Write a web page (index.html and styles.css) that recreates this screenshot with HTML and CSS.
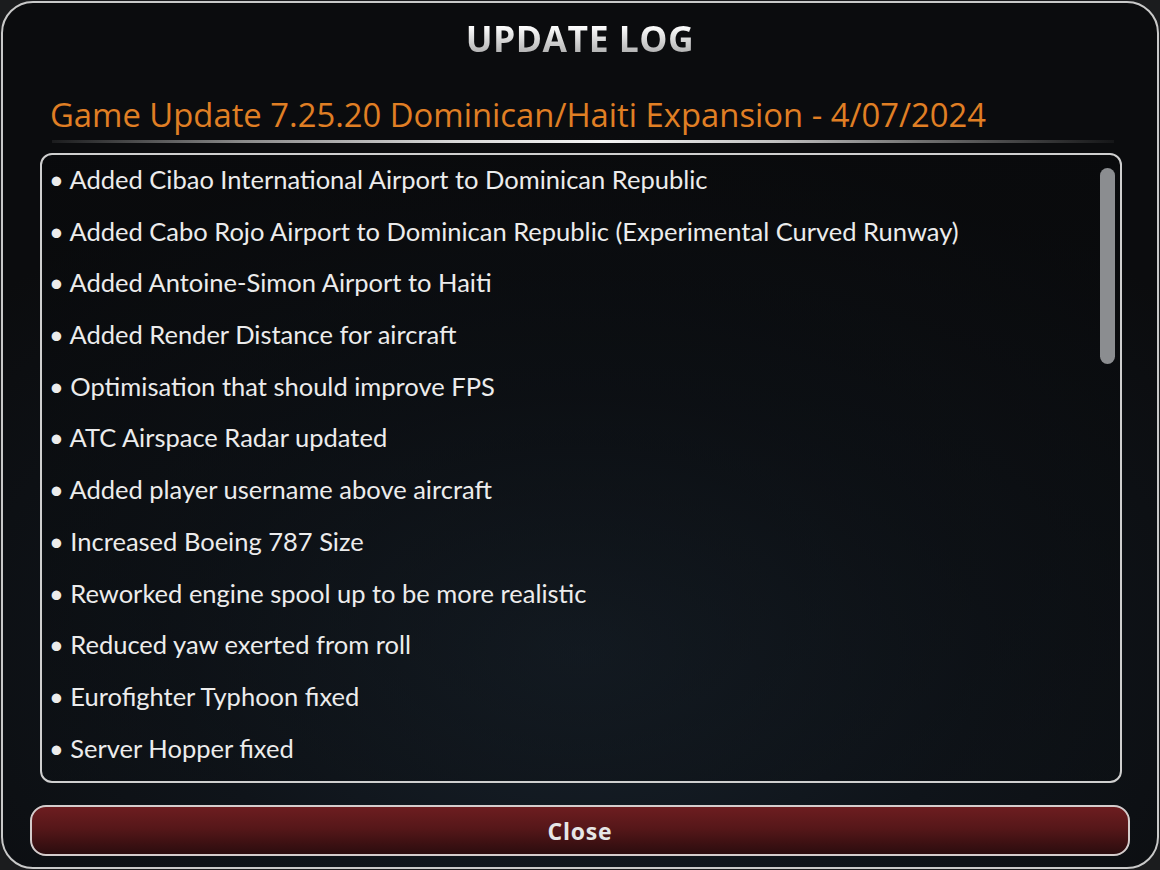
FILE: index.html
```html
<!DOCTYPE html>
<html>
<head>
<meta charset="utf-8">
<link rel="stylesheet" href="styles.css">
</head>
<body>
<div class="panel">
  <h1 class="title">UPDATE LOG</h1>
  <h2 class="subtitle">Game Update 7.25.20 Dominican/Haiti Expansion - 4/07/2024</h2>
  <div class="divider"></div>
  <div class="logbox">
    <ul class="items">
      <li>• Added Cibao International Airport to Dominican Republic</li>
      <li>• Added Cabo Rojo Airport to Dominican Republic (Experimental Curved Runway)</li>
      <li>• Added Antoine-Simon Airport to Haiti</li>
      <li>• Added Render Distance for aircraft</li>
      <li>• Optimisation that should improve FPS</li>
      <li>• ATC Airspace Radar updated</li>
      <li>• Added player username above aircraft</li>
      <li>• Increased Boeing 787 Size</li>
      <li>• Reworked engine spool up to be more realistic</li>
      <li>• Reduced yaw exerted from roll</li>
      <li>• Eurofighter Typhoon fixed</li>
      <li>• Server Hopper fixed</li>
    </ul>
    <div class="scrollbar"></div>
  </div>
  <button class="close">Close</button>
</div>
</body>
</html>
```
FILE: styles.css
```css
html, body {
  margin: 0;
  padding: 0;
  background: #1b1c1e;
}
body {
  width: 1160px;
  height: 870px;
  padding: 1px;
  box-sizing: border-box;
}
.panel {
  box-sizing: border-box;
  width: 1158px;
  height: 868px;
  border: 2px solid #c9c9c9;
  border-radius: 32px;
  background: radial-gradient(ellipse 70% 60% at 50% 75%, #18222c 0%, #0f141a 50%, #0b0c0e 100%);
  display: flex;
  flex-direction: column;
  padding: 0 27px 11px 27px;
  overflow: hidden;
}
.title {
  margin: 15px 0 0 0;
  height: 40px;
  flex: none;
  text-align: center;
  font-family: "Open Sans", sans-serif;
  font-weight: 700;
  font-size: 35.5px;
  line-height: 40px;
  letter-spacing: 0.5px;
  background: linear-gradient(180deg, #ffffff 20%, #a3a3a3 100%);
  -webkit-background-clip: text;
  background-clip: text;
  color: transparent;
}
.subtitle {
  margin: 39px 0 0 20px;
  height: 36px;
  flex: none;
  font-family: "Open Sans", sans-serif;
  font-weight: 400;
  font-size: 32.8px;
  line-height: 36px;
  color: #e07f24;
  white-space: nowrap;
}
.divider {
  margin: 7px 16px 0 22px;
  height: 3px;
  flex: none;
  background: linear-gradient(90deg, rgba(120,120,120,0.15) 0%, #8a8a8a 18%, #d8d8d8 38%, #f4f4f4 52%, #c0c0c0 68%, #707070 82%, rgba(80,80,80,0.15) 100%);
}
.logbox {
  margin: 10px 8px 0 10px;
  height: 630px;
  flex: none;
  box-sizing: border-box;
  border: 2px solid #cfcfcf;
  border-radius: 12px;
  display: flex;
  padding: 0 5px 0 7px;
  background: linear-gradient(180deg, rgba(8,9,11,0.6), rgba(12,16,20,0.4));
}
.items {
  list-style: none;
  margin: 0;
  padding: 0;
  flex: 1;
  display: flex;
  flex-direction: column;
  padding-top: 4px;
}
.items li {
  height: 51.7px;
  line-height: 40px;
  font-family: "Lato", sans-serif;
  font-size: 25.5px;
  color: #ececec;
  white-space: nowrap;
}
.scrollbar {
  width: 15px;
  height: 196px;
  margin-top: 13px;
  border-radius: 8px;
  background: #8b8d90;
}
.close {
  margin: 22px 0 0 0;
  height: 51px;
  width: 1100px;
  flex: none;
  box-sizing: border-box;
  border: 2px solid #d4cccc;
  border-radius: 16px;
  background: linear-gradient(180deg, #6d1d20 0%, #561719 45%, #2b0c0e 100%);
  font-family: "Open Sans", sans-serif;
  font-weight: 700;
  font-size: 23px;
  letter-spacing: 0.8px;
  color: #e6e6e6;
  padding: 0;
}
```
